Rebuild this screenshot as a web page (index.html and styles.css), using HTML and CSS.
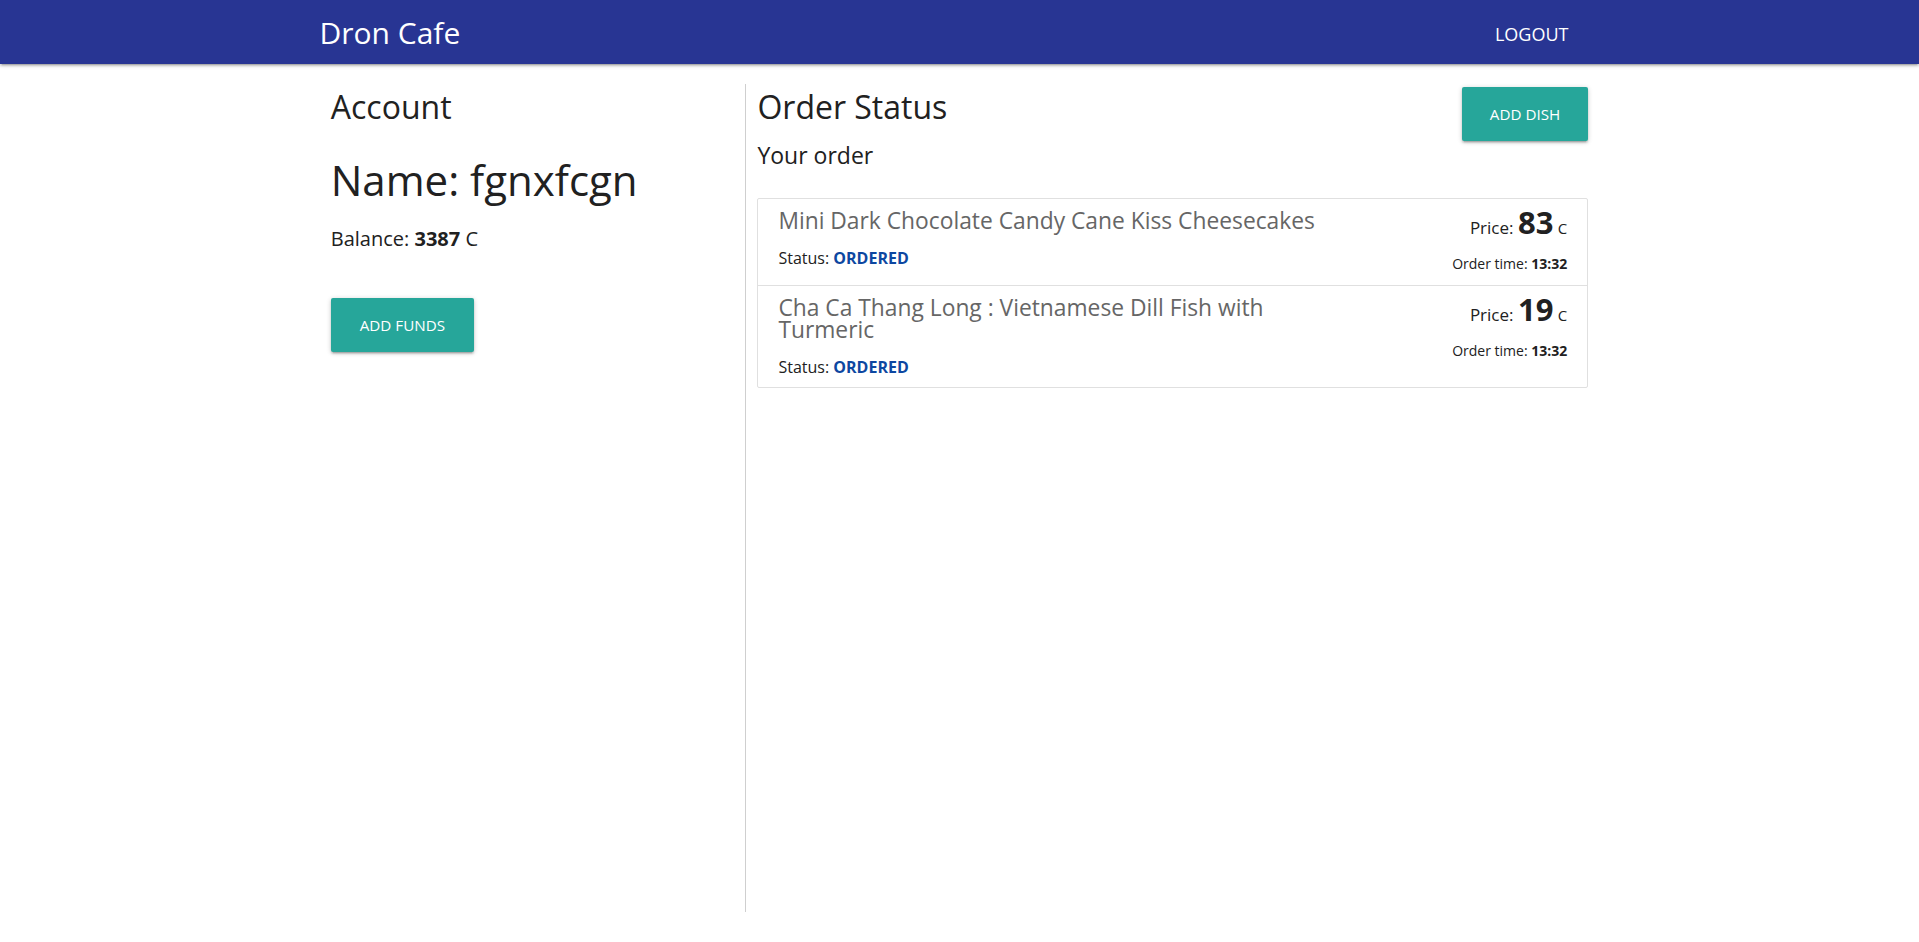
FILE: index.html
```html
<!DOCTYPE html>
<html lang="en">
<head>
<meta charset="utf-8">
<title>Dron Cafe</title>
<link rel="stylesheet" href="styles.css">
</head>
<body>
<nav class="nav">
  <div class="nav-inner">
    <a class="brand" href="#">Dron Cafe</a>
    <ul class="nav-links">
      <li><a href="#">LOGOUT</a></li>
    </ul>
  </div>
</nav>
<main class="container">
  <section class="col-account">
    <h4 class="heading">Account</h4>
    <h3 class="name">Name: fgnxfcgn</h3>
    <p class="balance">Balance: <b>3387</b> C</p>
    <button class="btn btn-funds">ADD FUNDS</button>
  </section>
  <section class="col-orders">
    <div class="orders-head">
      <div class="orders-titles">
        <h4 class="heading">Order Status</h4>
        <h5 class="subheading">Your order</h5>
      </div>
      <button class="btn btn-dish">ADD DISH</button>
    </div>
    <ul class="collection">
      <li class="item">
        <div class="item-main">
          <span class="title">Mini Dark Chocolate Candy Cane Kiss Cheesecakes</span>
          <p class="status">Status: <b>ORDERED</b></p>
        </div>
        <div class="item-side">
          <p class="price">Price: <b>83</b> <small>C</small></p>
          <p class="time">Order time: <b>13:32</b></p>
        </div>
      </li>
      <li class="item">
        <div class="item-main">
          <span class="title">Cha Ca Thang Long : Vietnamese Dill Fish with Turmeric</span>
          <p class="status">Status: <b>ORDERED</b></p>
        </div>
        <div class="item-side">
          <p class="price">Price: <b>19</b> <small>C</small></p>
          <p class="time">Order time: <b>13:32</b></p>
        </div>
      </li>
    </ul>
  </section>
</main>
</body>
</html>
```
FILE: styles.css
```css
* { box-sizing: border-box; }
html, body { margin: 0; padding: 0; }
body {
  font-family: "Open Sans", "Noto Sans", sans-serif;
  color: #212121;
  background: #fff;
}
.nav {
  height: 64px;
  background: #283593;
  box-shadow: 0 2px 2px 0 rgba(0,0,0,.14), 0 3px 1px -2px rgba(0,0,0,.12), 0 1px 5px 0 rgba(0,0,0,.2);
  position: relative;
  z-index: 2;
}
.nav-inner {
  width: 1280px;
  margin: 0 auto;
  height: 64px;
  display: flex;
  align-items: center;
  justify-content: space-between;
  padding-right: 16px;
}
.brand {
  color: #fff;
  text-decoration: none;
  font-size: 30px;
  line-height: 64px;
  padding-top: 2px;
}
.nav-links { list-style: none; margin: 0; padding: 0; display: flex; }
.nav-links a {
  color: #fff;
  text-decoration: none;
  font-size: 18px;
  line-height: 60px;
  padding: 4px 15px 0;
  display: block;
}
.container {
  width: 1280px;
  margin: 20px auto 0;
  display: flex;
  align-items: flex-start;
}
.col-account {
  width: 33.3333%;
  flex-shrink: 0;
  padding: 0 11.25px;
  border-right: 1px solid #cfcfcf;
  height: calc(100vh - 114px);
}
.col-orders {
  flex: 1;
  padding: 0 11.25px;
}
.heading {
  font-size: 32px;
  font-weight: 400;
  line-height: 40px;
  margin: 2.6px 0 0;
}
.name {
  font-size: 42px;
  font-weight: 400;
  line-height: 50px;
  margin: 28px 0 0;
}
.balance {
  font-size: 20px;
  line-height: 28px;
  margin: 20px 0 0;
}
.balance b, .status b, .time b, .price b { font-weight: 700; }
.btn {
  display: inline-block;
  height: 54px;
  line-height: 54px;
  padding: 0 28px;
  border: none;
  border-radius: 2px;
  background: #26a69a;
  color: #fff;
  font-family: inherit;
  font-size: 15.2px;
  box-shadow: 0 2px 2px 0 rgba(0,0,0,.14), 0 3px 1px -2px rgba(0,0,0,.12), 0 1px 5px 0 rgba(0,0,0,.2);
  cursor: pointer;
}
.btn-funds { margin-top: 45px; padding: 0 29px; }
.btn-dish { margin-top: 3px; }
.orders-head {
  display: flex;
  justify-content: space-between;
  align-items: flex-start;
}
.subheading {
  font-size: 23px;
  font-weight: 400;
  line-height: 30px;
  margin: 13px 0 0;
}
.collection {
  list-style: none;
  margin: 28px 0 0;
  padding: 0;
  border: 1px solid #e0e0e0;
  border-radius: 2px;
}
.item {
  display: flex;
  justify-content: space-between;
  padding: 0 20px;
  border-bottom: 1px solid #e0e0e0;
}
.item:last-child { border-bottom: none; }
.item-main {
  flex: 1;
  max-width: 565px;
  padding: 11px 0 9px;
}
.title {
  display: block;
  font-size: 22.8px;
  line-height: 22px;
  color: #666;
}
.status {
  font-size: 16px;
  line-height: 22px;
  margin: 15px 0 0;
}
.status b { color: #0d47a1; }
.item-side {
  text-align: right;
  flex-shrink: 0;
  padding: 5px 0 11px;
}
.price {
  font-size: 17px;
  line-height: 36px;
  margin: 0;
}
.price b { font-size: 31px; }
.price small { font-size: 15px; }
.time {
  font-size: 14px;
  line-height: 20px;
  margin: 8px 0 0;
}
```
